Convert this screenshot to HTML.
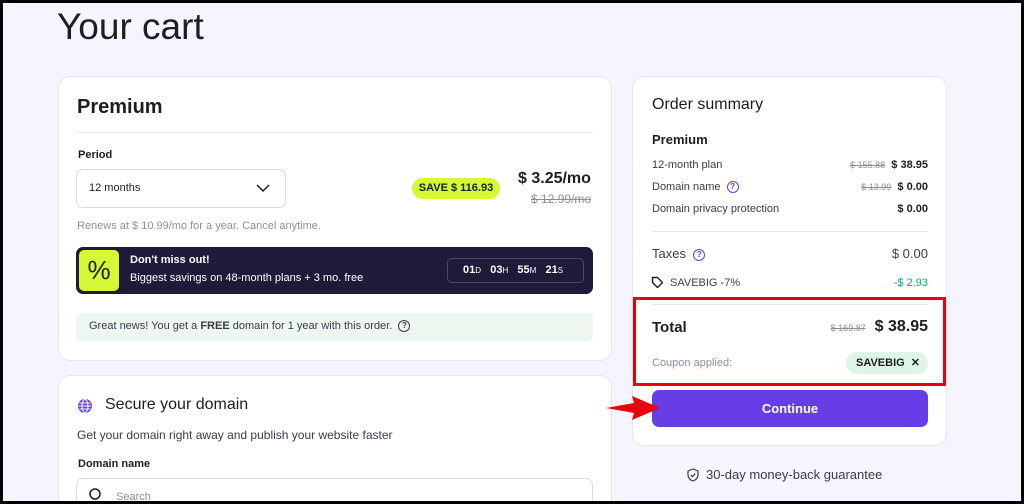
<!DOCTYPE html>
<html style="width:1024px;height:504px;overflow:hidden"><head><style>
*{margin:0;padding:0;box-sizing:border-box}
body{width:1024px;height:504px;overflow:hidden;background:#f4f5ff;font-family:"Liberation Sans",sans-serif;color:#2f1c6a;position:relative}
.frame{position:absolute;left:0;top:0;width:1024px;height:504px;border:3px solid #000;z-index:10;pointer-events:none}
.a{position:absolute;white-space:nowrap}
.card{position:absolute;background:#fff;border:1px solid #e6e6ef;border-radius:12px}
.t{color:#1d1e20}
.g{color:#6d7081}
.s{text-decoration:line-through;color:#8c8fa0}
.q{display:inline-block;width:12px;height:12px;border:1.5px solid #673de6;border-radius:50%;font-size:8px;line-height:9px;text-align:center;color:#673de6;font-weight:bold;vertical-align:middle}
</style></head><body>
<div class="frame"></div>
<div class="a t" style="left:57px;top:6px;font-size:37px">Your cart</div>

<div class="card" style="left:58px;top:76px;width:554px;height:285px"></div>
<div class="a t" style="left:77px;top:96px;font-size:20px;font-weight:bold">Premium</div>
<div class="a" style="left:77px;top:132px;width:516px;height:1px;background:#e6e6ef"></div>
<div class="a t" style="left:78px;top:149px;font-size:11px;font-weight:bold">Period</div>
<div class="a" style="left:76px;top:169px;width:210px;height:39px;border:1px solid #dadce0;border-radius:7px;background:#fff"></div>
<div class="a t" style="left:89px;top:182px;font-size:11px">12 months</div>
<svg class="a" style="left:255px;top:183px" width="16" height="10"><path d="M2 2l6 6 6-6" fill="none" stroke="#1d1e20" stroke-width="1.5"/></svg>
<div class="a" style="left:412px;top:178px;width:88px;height:21px;background:#d5f935;border-radius:11px;font-size:11px;font-weight:bold;text-align:center;line-height:21px;color:#1d1e20">SAVE $ 116.93</div>
<div class="a t" style="left:518px;top:170px;font-size:16px;font-weight:bold">$ 3.25/mo</div>
<div class="a s" style="left:531px;top:192px;font-size:12px">$ 12.99/mo</div>
<div class="a g" style="left:77px;top:220px;font-size:11px;color:#8c8fa0">Renews at $ 10.99/mo for a year. Cancel anytime.</div>
<div class="a" style="left:76px;top:247px;width:517px;height:47px;background:#1d1a3a;border-radius:7px"></div>
<div class="a" style="left:79px;top:250px;width:40px;height:41px;background:#d5f935;border-radius:5px;font-size:26px;text-align:center;line-height:41px;color:#1d1e20">%</div>
<div class="a" style="left:130px;top:254px;font-size:11px;font-weight:bold;color:#fff">Don't miss out!</div>
<div class="a" style="left:130px;top:272px;font-size:11px;color:#fff">Biggest savings on 48-month plans + 3 mo. free</div>
<div class="a" style="left:447px;top:258px;width:137px;height:25px;border:1px solid #4a4766;border-radius:5px;font-size:11px;font-weight:bold;color:#fff;line-height:23px;padding-left:15px">01<small style="font-weight:normal;font-size:8px">D</small>&nbsp;&nbsp; 03<small style="font-weight:normal;font-size:8px">H</small>&nbsp;&nbsp; 55<small style="font-weight:normal;font-size:8px">M</small>&nbsp;&nbsp; 21<small style="font-weight:normal;font-size:8px">S</small></div>
<div class="a" style="left:76px;top:313px;width:517px;height:28px;background:#eef6f0;border-radius:5px"></div>
<div class="a" style="left:89px;top:320px;font-size:11px;color:#3a3c4a">Great news! You get a <b>FREE</b> domain for 1 year with this order. &nbsp;<span class="q" style="border-color:#3a3c4a;color:#3a3c4a">?</span></div>

<div class="card" style="left:58px;top:375px;width:554px;height:129px;border-bottom-left-radius:0;border-bottom-right-radius:0"></div>
<svg class="a" style="left:77px;top:398px" width="16" height="16"><circle cx="8" cy="8" r="7" fill="#673de6"/><ellipse cx="8" cy="8" rx="3" ry="6.5" fill="none" stroke="#fff" stroke-width="1"/><path d="M1.5 8h13M2.5 5h11M2.5 11h11" stroke="#fff" stroke-width="1"/></svg>
<div class="a t" style="left:105px;top:396px;font-size:16px">Secure your domain</div>
<div class="a" style="left:77px;top:428px;font-size:12px;color:#3a3c4a">Get your domain right away and publish your website faster</div>
<div class="a t" style="left:78px;top:458px;font-size:11px;font-weight:bold">Domain name</div>
<div class="a" style="left:76px;top:478px;width:517px;height:26px;border:1px solid #dadce0;border-bottom:none;border-radius:7px 7px 0 0"></div>
<svg class="a" style="left:89px;top:488px" width="14" height="14"><circle cx="6" cy="6" r="5" fill="none" stroke="#1d1e20" stroke-width="1.5"/></svg>
<div class="a" style="left:116px;top:491px;font-size:11px;color:#8c8fa0">Search</div>

<div class="card" style="left:632px;top:76px;width:315px;height:370px"></div>
<div class="a t" style="left:652px;top:96px;font-size:16px">Order summary</div>
<div class="a t" style="left:652px;top:132px;font-size:13px;font-weight:bold">Premium</div>
<div class="a" style="left:652px;top:159px;font-size:11px;color:#3a3c4a">12-month plan</div>
<div class="a" style="right:96px;top:159px;font-size:11px"><span class="s" style="font-size:9px">$ 155.88</span>&nbsp; <b class="t">$ 38.95</b></div>
<div class="a" style="left:652px;top:181px;font-size:11px;color:#3a3c4a">Domain name &nbsp;<span class="q">?</span></div>
<div class="a" style="right:96px;top:181px;font-size:11px"><span class="s" style="font-size:9px">$ 13.99</span>&nbsp; <b class="t">$ 0.00</b></div>
<div class="a" style="left:652px;top:203px;font-size:11px;color:#3a3c4a">Domain privacy protection</div>
<div class="a" style="right:96px;top:203px;font-size:11px"><b class="t">$ 0.00</b></div>
<div class="a" style="left:652px;top:231px;width:276px;height:1px;background:#e6e6ef"></div>
<div class="a" style="left:652px;top:246px;font-size:13px;color:#3a3c4a">Taxes &nbsp;<span class="q">?</span></div>
<div class="a" style="right:96px;top:246px;font-size:13px;color:#3a3c4a">$ 0.00</div>
<svg class="a" style="left:651px;top:276px" width="13" height="13"><path d="M1.5 1.5h5l5 5-5 5-5-5z" fill="none" stroke="#1d1e20" stroke-width="1.4" stroke-linejoin="round"/></svg>
<div class="a" style="left:670px;top:277px;font-size:11px;color:#3a3c4a">SAVEBIG -7%</div>
<div class="a" style="right:96px;top:277px;font-size:11px;color:#00b36b">-$ 2.93</div>
<div class="a" style="left:652px;top:304px;width:276px;height:1px;background:#e6e6ef"></div>
<div class="a" style="left:633px;top:297px;width:313px;height:89px;border:3px solid #e8000b"></div>
<div class="a t" style="left:652px;top:319px;font-size:15px;font-weight:bold">Total</div>
<div class="a" style="right:96px;top:318px;font-size:16px"><span class="s" style="font-size:9px">$ 169.87</span>&nbsp; <b class="t">$ 38.95</b></div>
<div class="a" style="left:652px;top:357px;font-size:11px;color:#8c8fa0">Coupon applied:</div>
<div class="a" style="left:846px;top:352px;width:82px;height:22px;background:#def4e7;border-radius:11px;font-size:11px;font-weight:bold;line-height:22px;padding-left:10px;color:#1d1e20">SAVEBIG &nbsp;✕</div>
<div class="a" style="left:652px;top:390px;width:276px;height:37px;background:#673de6;border-radius:7px;color:#fff;font-size:13px;font-weight:bold;text-align:center;line-height:37px">Continue</div>
<svg class="a" style="left:604px;top:395px" width="58" height="26"><path d="M2 13 L30 8 L28 1 L56 13 L28 25 L30 18 Z" fill="#e8000b"/></svg>
<svg class="a" style="left:687px;top:468px" width="12" height="14"><path d="M6 1L1 3v4c0 3 2.5 5 5 6 2.5-1 5-3 5-6V3z" fill="none" stroke="#3a3c4a" stroke-width="1.2"/><path d="M3.8 7l1.6 1.6L8.4 5.6" fill="none" stroke="#3a3c4a" stroke-width="1.2"/></svg>
<div class="a" style="left:706px;top:467px;font-size:13px;color:#3a3c4a">30-day money-back guarantee</div>
</body></html>
